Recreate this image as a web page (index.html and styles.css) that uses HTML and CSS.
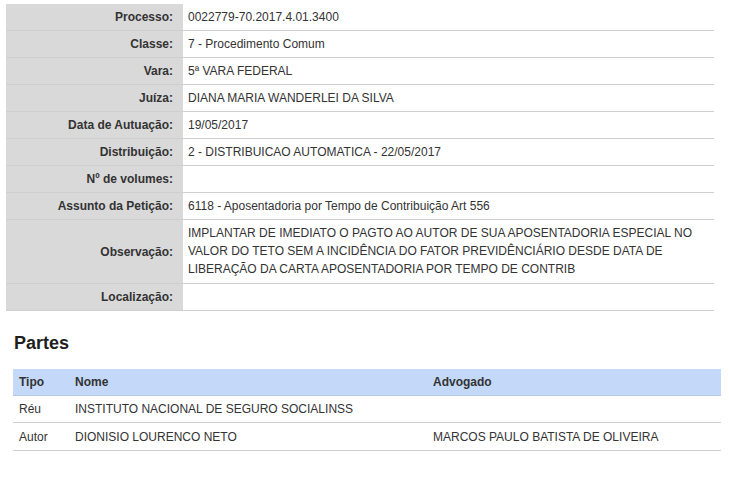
FILE: index.html
```html
<!DOCTYPE html>
<html lang="pt-BR">
<head>
<meta charset="utf-8">
<title>Processo</title>
<link rel="stylesheet" href="styles.css">
</head>
<body>
<table class="info">
  <tr><th>Processo:</th><td>0022779-70.2017.4.01.3400</td></tr>
  <tr><th>Classe:</th><td>7 - Procedimento Comum</td></tr>
  <tr><th>Vara:</th><td>5ª VARA FEDERAL</td></tr>
  <tr><th>Juíza:</th><td>DIANA MARIA WANDERLEI DA SILVA</td></tr>
  <tr><th>Data de Autuação:</th><td>19/05/2017</td></tr>
  <tr><th>Distribuição:</th><td>2 - DISTRIBUICAO AUTOMATICA - 22/05/2017</td></tr>
  <tr><th>Nº de volumes:</th><td></td></tr>
  <tr><th>Assunto da Petição:</th><td>6118 - Aposentadoria por Tempo de Contribuição Art 556</td></tr>
  <tr class="multi"><th>Observação:</th><td>IMPLANTAR DE IMEDIATO O PAGTO AO AUTOR DE SUA APOSENTADORIA ESPECIAL NO VALOR DO TETO SEM A INCIDÊNCIA DO FATOR PREVIDÊNCIÁRIO DESDE DATA DE LIBERAÇÃO DA CARTA APOSENTADORIA POR TEMPO DE CONTRIB</td></tr>
  <tr><th>Localização:</th><td></td></tr>
</table>

<h2 class="section-title">Partes</h2>

<table class="partes">
  <thead>
    <tr><th class="c-tipo">Tipo</th><th class="c-nome">Nome</th><th>Advogado</th></tr>
  </thead>
  <tbody>
    <tr><td>Réu</td><td>INSTITUTO NACIONAL DE SEGURO SOCIALINSS</td><td></td></tr>
    <tr class="last"><td>Autor</td><td>DIONISIO LOURENCO NETO</td><td>MARCOS PAULO BATISTA DE OLIVEIRA</td></tr>
  </tbody>
</table>
</body>
</html>
```

FILE: styles.css
```css
html, body {
  margin: 0;
  padding: 0;
  background: #ffffff;
}

body {
  font-family: "Liberation Sans", Arial, sans-serif;
  font-size: 12px;
  color: #333333;
  padding: 4px 0 0 6px;
}

table {
  border-collapse: collapse;
  border-spacing: 0;
}

.info {
  width: 708px;
}

.info th,
.info td {
  padding: 4px 0;
  line-height: 18px;
  border-bottom: 1px solid #cfcfcf;
  vertical-align: middle;
}

.info th {
  width: 167px;
  background: #d9d9d9;
  text-align: right;
  font-weight: bold;
  padding-right: 10px;
  white-space: nowrap;
}

.info td {
  padding-left: 5px;
  padding-right: 6px;
  vertical-align: top;
  background: #ffffff;
}

.info .multi td {
  padding-bottom: 5px;
}

.section-title {
  margin: 21px 0 0 8px;
  font-size: 18px;
  line-height: 22px;
  font-weight: bold;
  color: #1e1e1e;
}

.partes {
  margin: 15px 0 0 7px;
  width: 708px;
}

.partes th,
.partes td {
  text-align: left;
  padding: 4px 0 4px 6px;
  line-height: 18px;
  border-bottom: 1px solid #cfcfcf;
}

.partes .last td {
  padding-top: 5px;
}

.partes th {
  background: #c4d9fa;
  font-weight: bold;
  border-bottom-color: #b8c8dc;
}

.partes .c-tipo {
  width: 50px;
}

.partes .c-nome {
  width: 352px;
}
```
